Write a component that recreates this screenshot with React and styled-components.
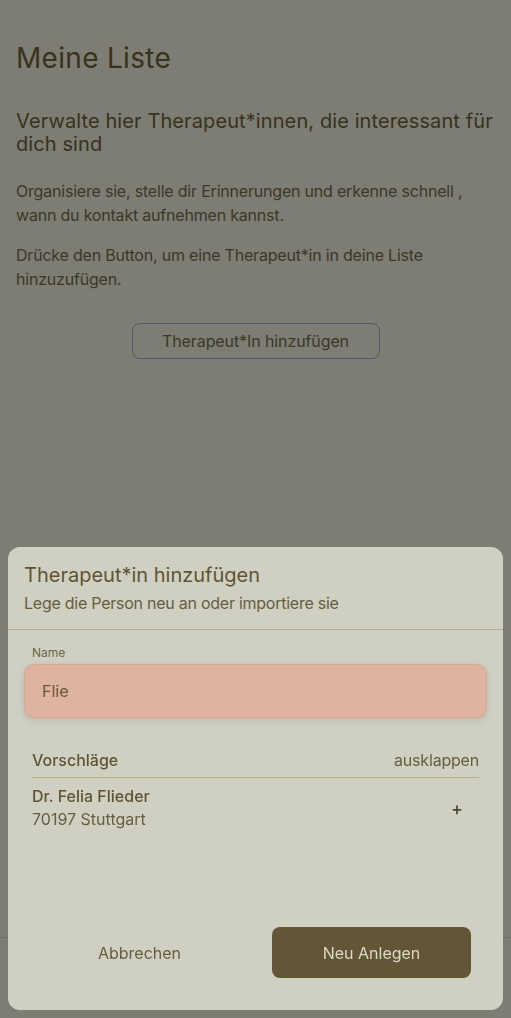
import React from 'react'
import styled, { createGlobalStyle } from 'styled-components'

const GlobalStyle = createGlobalStyle`
    * {
        box-sizing: border-box;
    }
    body {
        margin: 0;
        background: #d0d0c2;
        font-family: Inter, 'Noto Sans', sans-serif;
        color: #615637;
    }
`

function App() {
    return (
        <>
            <GlobalStyle />
            <Page>
                <Content>
                    <Title>Meine Liste</Title>
                    <Lead>Verwalte hier Therapeut*innen, die interessant für dich sind</Lead>
                    <Text>
                        Organisiere sie, stelle dir Erinnerungen und erkenne schnell , wann du
                        kontakt aufnehmen kannst.
                    </Text>
                    <Text>Drücke den Button, um eine Therapeut*in in deine Liste hinzuzufügen.</Text>
                    <OutlineButton>Therapeut*In hinzufügen</OutlineButton>
                </Content>
                <BottomNav />
            </Page>
            <Overlay />
            <Sheet>
                <SheetHeader>
                    <SheetTitle>Therapeut*in hinzufügen</SheetTitle>
                    <SheetSubtitle>Lege die Person neu an oder importiere sie</SheetSubtitle>
                </SheetHeader>
                <SheetBody>
                    <Field>
                        <Label>Name</Label>
                        <Input defaultValue="Flie" />
                    </Field>
                    <Suggestions>
                        <SuggestHead>
                            <strong>Vorschläge</strong>
                            <span>ausklappen</span>
                        </SuggestHead>
                        <SuggestItem>
                            <div>
                                <Name>Dr. Felia Flieder</Name>
                                <City>70197 Stuttgart</City>
                            </div>
                            <Plus>+</Plus>
                        </SuggestItem>
                    </Suggestions>
                </SheetBody>
                <Footer>
                    <FooterButton>Abbrechen</FooterButton>
                    <FooterButton primary>Neu Anlegen</FooterButton>
                </Footer>
            </Sheet>
        </>
    )
}

const Page = styled.div`
    min-height: 100vh;
    display: flex;
    flex-direction: column;
`
const Content = styled.main`
    padding: 40px 16px 0;
    display: flex;
    flex-direction: column;
`
const Title = styled.h1`
    margin: 0 0 34px;
    font-size: 28px;
    line-height: 36px;
    font-weight: 400;
    letter-spacing: 0.3px;
    color: #5e5434;
`
const Lead = styled.h2`
    margin: 0 0 23px;
    font-size: 20px;
    line-height: 23px;
    font-weight: 400;
    letter-spacing: 0.1px;
    color: #5e5434;
`
const Text = styled.p`
    margin: 0 0 16px;
    font-size: 16px;
    line-height: 24px;
    letter-spacing: -0.2px;
    color: #665d40;
`
const OutlineButton = styled.button`
    align-self: center;
    margin-top: 16px;
    width: 248px;
    height: 36px;
    border: 1px solid #8e8ab8;
    border-radius: 8px;
    background: transparent;
    font-family: inherit;
    font-size: 16px;
    letter-spacing: -0.1px;
    color: #665d40;
`
const BottomNav = styled.nav`
    margin-top: auto;
    height: 81px;
    border-top: 1px solid #b8b8aa;
`
const Overlay = styled.div`
    position: fixed;
    inset: 0;
    background: rgba(0, 0, 0, 0.4);
`
const Sheet = styled.section`
    position: fixed;
    left: 8px;
    right: 8px;
    bottom: 8px;
    height: 463px;
    display: flex;
    flex-direction: column;
    background: #d0d0c2;
    border-radius: 12px;
`
const SheetHeader = styled.header`
    padding: 14px 16px 14px;
    border-bottom: 1px solid #b4b09c;
`
const SheetTitle = styled.h3`
    margin: 0 0 2px;
    font-size: 20px;
    line-height: 28px;
    font-weight: 400;
    color: #5e5434;
`
const SheetSubtitle = styled.p`
    margin: 0;
    font-size: 16px;
    line-height: 24px;
    letter-spacing: -0.25px;
    color: #665d40;
`
const SheetBody = styled.div`
    flex: 1;
    padding: 15px 16px 0;
`
const Field = styled.label`
    display: flex;
    flex-direction: column;
    gap: 3px;
`
const Label = styled.span`
    padding-left: 8px;
    font-size: 12px;
    line-height: 16px;
    color: #6b6548;
`
const Input = styled.input`
    height: 54px;
    padding: 0 17px;
    border: 1px solid #dba894;
    border-radius: 10px;
    background: #dfb3a0;
    box-shadow: 0 2px 6px rgba(0, 0, 0, 0.12);
    font-family: inherit;
    font-size: 16px;
    color: #6b5a3a;
    outline: none;
`
const Suggestions = styled.div`
    margin-top: 30px;
    padding: 0 8px;
`
const SuggestHead = styled.div`
    display: flex;
    justify-content: space-between;
    align-items: center;
    padding-bottom: 5px;
    border-bottom: 1px solid #b9b096;
    font-size: 16px;
    line-height: 24px;
    strong {
        font-weight: 500;
        color: #5e5434;
    }
    span {
        letter-spacing: -0.2px;
        color: #665d40;
    }
`
const SuggestItem = styled.div`
    display: flex;
    justify-content: space-between;
    align-items: center;
    padding-top: 7px;
`
const Name = styled.div`
    font-size: 16px;
    line-height: 23px;
    font-weight: 500;
    color: #5e5434;
`
const City = styled.div`
    font-size: 16px;
    line-height: 23px;
    color: #665d40;
`
const Plus = styled.span`
    margin-right: 16px;
    font-size: 18px;
    font-weight: 500;
    color: #4e4630;
`
const Footer = styled.footer`
    display: grid;
    grid-template-columns: 1fr 1fr;
    gap: 33px;
    padding: 0 32px 32px;
`
const FooterButton = styled.button`
    height: 51px;
    border: none;
    border-radius: 8px;
    background: ${(p) => (p.primary ? '#625637' : 'transparent')};
    font-family: inherit;
    font-size: 16px;
    color: ${(p) => (p.primary ? '#ddd8c4' : '#665d40')};
`

export default App
